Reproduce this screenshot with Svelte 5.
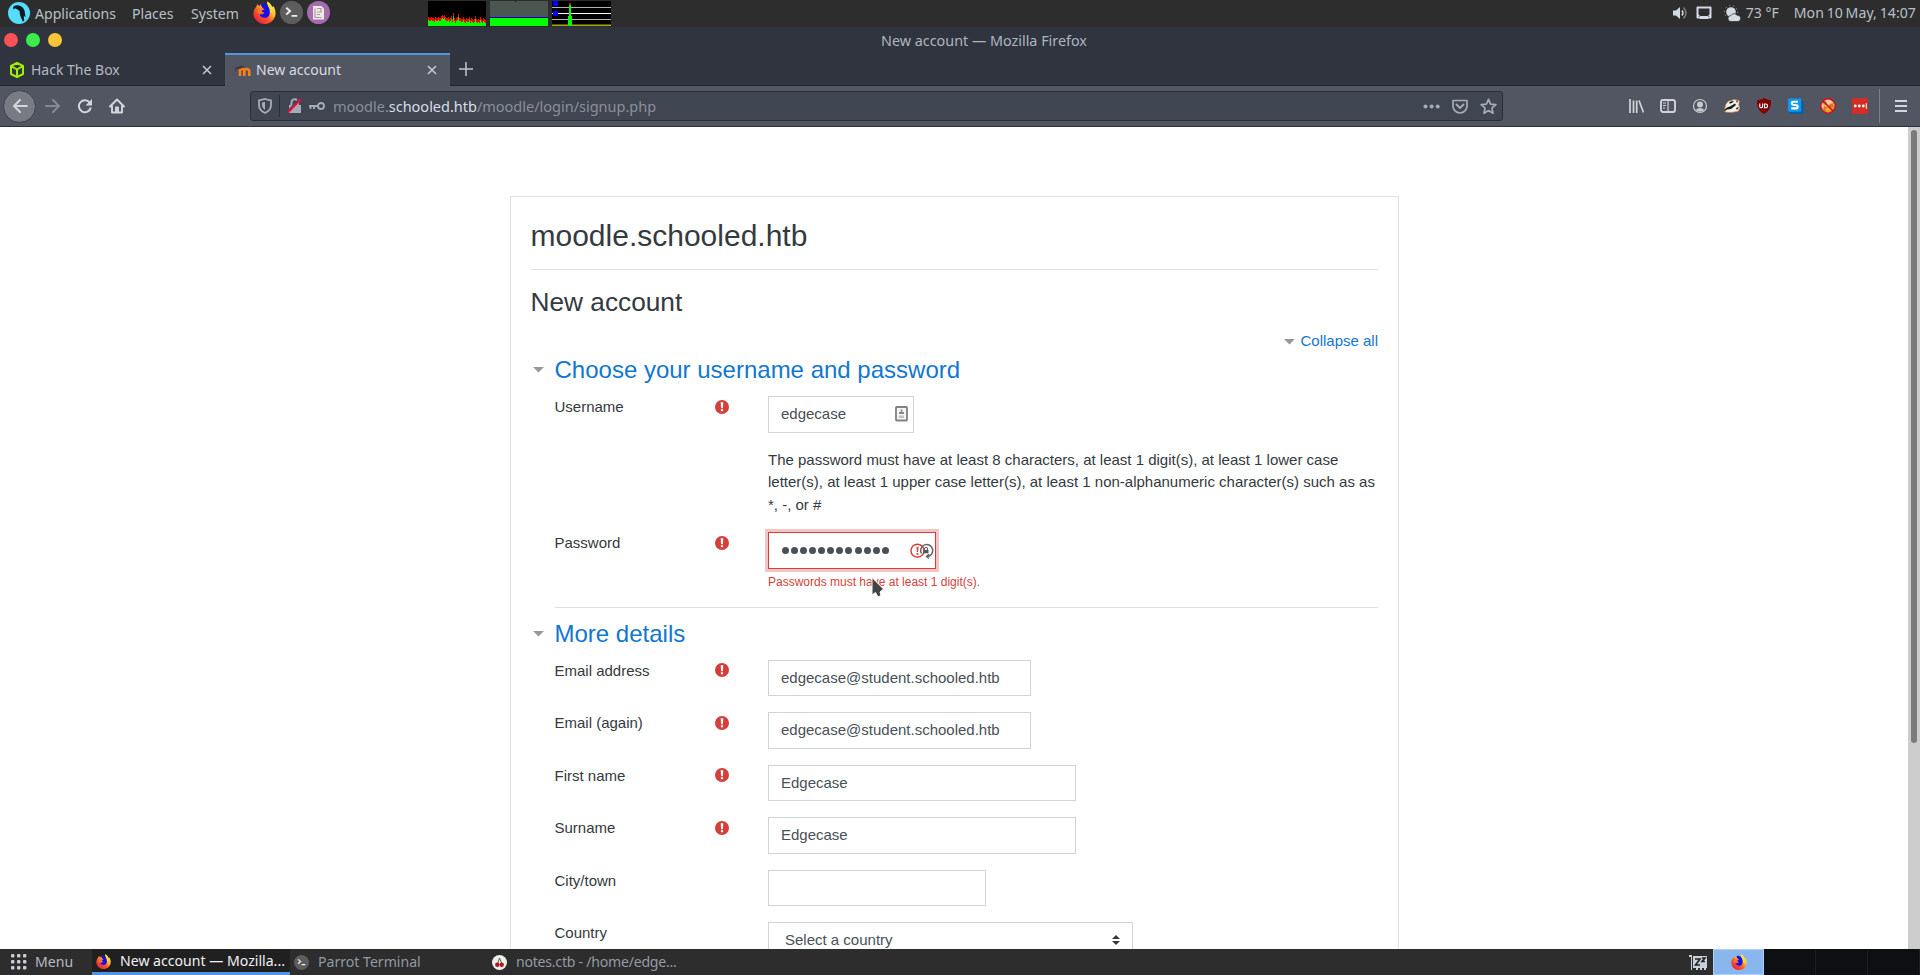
<script>
  const rows = [
    { label: 'Email address', req: true, value: 'edgecase@student.schooled.htb', w: 263 },
    { label: 'Email (again)', req: true, value: 'edgecase@student.schooled.htb', w: 263 },
    { label: 'First name', req: true, value: 'Edgecase', w: 308 },
    { label: 'Surname', req: true, value: 'Edgecase', w: 308 },
    { label: 'City/town', req: false, value: '', w: 218 }
  ];
  const cpu = [8,7,7,8,7,7,6,8,7,7,8,7,7,9,10,9,10,8,7,7,8,6,7,9,6,12,7,5,7,8,11,7,7,6,6,8,6,5,7,6,6,8,5,7,6,5,6,9,6,5,6,5,8,6,5,7,6,5];
</script>

{#snippet fox(s)}
  <svg width={s} height={s} viewBox="0 0 24 24">
    <defs>
      <linearGradient id="flame" x1="0.9" y1="0.05" x2="0.2" y2="0.95">
        <stop offset="0" stop-color="#fff44f" /><stop offset=".35" stop-color="#ffc230" />
        <stop offset=".62" stop-color="#ff5a2c" /><stop offset="1" stop-color="#e8203f" />
      </linearGradient>
    </defs>
    <path fill="url(#flame)" d="M3 6.5 4.8 3.2 6.4 5.4 9 2.6 9.5 5.4 13 7 16 5.5 14.8 0.5C18 2 19.5 4.5 20 6.2L21.5 5.5C23 8.5 23.7 11 23.5 13.5 23 19.8 18 24 12 24S.7 19.500.5 13C.5 10.500 1.500 8 3 6.500Z" />
    <path fill="#1510e8" d="M8.500 3C14 1.500 18 6.500 17.500 12.500 17 17 14 18 11.500 17.500 8.500 17 7 15.500 6.500 13.300 8.500 14.500 10.500 14 12 12.500 10 11.800 8.500 10.500 8.500 9.500L12 8.500C10.500 7.500 8 6 8.500 3Z" />
    <path fill="#ff7b22" d="M5 7.500 9 8 12.300 8.700 8.800 10.200 9.700 12 7 14 4.500 12Z" />
    <path fill="#ffe03c" d="M14.800 .5C14 5 19 7 18.500 13 22 9 19.500 3.500 14.800 .5Z" />
  </svg>
{/snippet}

{#snippet term(s)}
  <svg width={s} height={s} viewBox="0 0 24 24"><circle cx="12" cy="12" r="12" fill="#5d5d5d" /><path d="M6.500 7 10.500 10.500 6.500 14M12 15.500h6" fill="none" stroke="#eee" stroke-width="2" /></svg>
{/snippet}

{#snippet req()}
  <svg class="req" width="14" height="14" viewBox="0 0 14 14"><circle cx="7" cy="7" r="7" fill="#d43f3a" /><path d="M5.700 2.300h2.600l-.4 6H6.100zM5.900 9.200h2.200v2.100H5.900z" fill="#fff" /></svg>
{/snippet}

{#snippet close()}
  <svg class="close" width="10" height="10" viewBox="0 0 10 10"><path d="M1 1 9 9M9 1 1 9" stroke="#c6cad2" stroke-width="1.500" /></svg>
{/snippet}

<div class="screen">
  <header class="panel">
    <svg class="parrot" width="22" height="22" viewBox="0 0 22 22"><circle cx="11" cy="11" r="11" fill="#55dcff" /><path d="M5 5.500C6 3.200 9.500 2.500 12.500 4 15.500 5.500 16.800 8 17 11.500L17.500 15.500 15.800 13.500 16.200 19 14.800 19.500 13 15.500C12 13.500 11.800 11.500 11.500 9L9.500 7.500 7 6.200 5.500 7.500Z" fill="#101820" /></svg>
    <span class="m1">Applications</span><span class="m2">Places</span><span class="m3">System</span>
    <span class="ql">{@render fox(23)}{@render term(23)}
      <svg width="23" height="23" viewBox="0 0 23 23"><circle cx="11.500" cy="11.500" r="11.500" fill="#a56bae" /><path d="M6 5h8.500l2.500 2.500v11H6z" fill="#f1e9e5" /><path d="M8 7.500v9h6.500M10 7.500h4v3.500h-4M10 13.500h3" fill="none" stroke="#a79aa5" stroke-width="1.200" /></svg>
    </span>
    <svg class="graphs" width="183" height="25" viewBox="0 0 183 25" shape-rendering="crispEdges">
      <path d="M0 0h58v25H0zM124 0h59v25h-59z" fill="#000" />
      {#each cpu as h, i}
        <rect x={i} y={24 - h} width="1" height={h} fill="#f00" /><rect x={i} y={26.500 - h} width="1" height={h - 1.500} fill="#0f0" />
      {/each}
      <path d="M62 0h58v16H62z" fill="#4a564f" /><path d="M62 16h58v1H62z" fill="#0000c8" /><path d="M62 17h58v8H62z" fill="#0f0" />
      <path d="M87 0h1v1h-1z" fill="#000" />
      <path d="M124 6.500h59M124 18.500h59" stroke="#b4b4b4" stroke-width="1" /><path d="M124 12.500h59" stroke="#fff" />
      <path d="M125 0h5v5h-5zM125 10h5v5h-5z" fill="#00f" /><path d="M124 23h59v1h-59z" fill="#f00" /><path d="M124 24h59v1h-59z" fill="#0f0" />
      <path d="M140 25V15h1V3h2v12h1v10z" fill="#0f0" /><path d="M141 2h2v2h-2z" fill="#f00" />
    </svg>
    <span class="tray">
      <svg width="16" height="16" viewBox="0 0 16 16"><path d="M1 5.500h3L8 2v12l-4-3.500H1z" fill="#d3dae3" /><path d="M10 5.500q1.800 2.500 0 5" fill="none" stroke="#d3dae3" stroke-width="1.500" /><path d="M11.500 2.500q5 5.500 0 11" fill="none" stroke="#777c82" stroke-width="1.500" /></svg>
      <svg class="t2" width="16" height="14" viewBox="0 0 16 14"><path d="M1.500 1.500h13v10h-13z" fill="none" stroke="#d3dae3" stroke-width="2" stroke-linejoin="round" /><path d="M4 10h8v3H4z" fill="#d3dae3" /><path d="M2 8v2h2zM14 8v2h-2z" fill="#d3dae3" /></svg>
      <svg class="t3" width="17" height="17" viewBox="0 0 17 17"><circle cx="7" cy="7" r="4.800" fill="#d3dae3" /><circle cx="7" cy="7" r="6.500" fill="none" stroke="#aab0b8" stroke-width="1" stroke-dasharray="1 3" /><path d="M7 16.500a2.900 2.900 0 0 1 0-6 3.500 3.500 0 0 1 6-.3 3 3 0 0 1 1 6.300z" fill="#d3dae3" stroke="#2d2d2d" stroke-width=".7" /></svg>
      <span class="temp">73 °F</span><span class="clock">Mon 10 May, 14:07</span>
    </span>
  </header>

  <div class="title"><span class="lights"><i class="r"></i><i class="g"></i><i class="y"></i></span><span>New account — Mozilla Firefox</span></div>

  <div class="tabs">
    <div class="tab">
      <svg class="fav" width="16" height="18" viewBox="0 0 16 18"><path d="M8 1.800 14 5v8L8 16.200 2 13V5zM3 5.500l5 3 5-3M8 8.500V15" fill="none" stroke="#9fef00" stroke-width="2" stroke-linejoin="round" /></svg>
      <span>Hack The Box</span>{@render close()}
    </div>
    <div class="tab active">
      <svg class="fav" width="16" height="16" viewBox="0 0 16 16"><path d="M5 14V9q0-2 2-2t2.300 2v5M9.300 9q.2-2 2.400-2t2.600 2v5" fill="none" stroke="#f98012" stroke-width="2.600" /><path d="M0 5.500 7 3.500 9.500 4 6.500 6.500 3 7 1 7.500V10H.3z" fill="#403c3b" /></svg>
      <span>New account</span>{@render close()}
    </div>
    <svg class="plus" width="14" height="14" viewBox="0 0 14 14"><path d="M7 0v14M0 7h14" stroke="#c0c4cd" stroke-width="1.500" /></svg>
  </div>

  <div class="toolbar">
    <span class="back"><svg width="16" height="16" viewBox="0 0 16 16"><path d="M15 8H2M8 2 2 8l6 6" fill="none" stroke="#d3d6dd" stroke-width="2" stroke-linecap="round" stroke-linejoin="round" /></svg></span>
    <svg class="fwd" width="16" height="16" viewBox="0 0 16 16"><path d="M1 8h13M8 2l6 6-6 6" fill="none" stroke="#858994" stroke-width="2" stroke-linecap="round" stroke-linejoin="round" /></svg>
    <svg class="rel" width="16" height="16" viewBox="0 0 16 16"><path d="M13 5A6 6 0 1 0 13.800 9.500" fill="none" stroke="#d3d6dd" stroke-width="2" /><path d="M15 1v6.500H8.500z" fill="#d3d6dd" /></svg>
    <svg class="home" width="16" height="16" viewBox="0 0 16 16"><path d="M1 8.500 8 1.500l7 7M3 8v6.500h10V8M7 14V9.500h2V14" fill="none" stroke="#d3d6dd" stroke-width="1.900" stroke-linejoin="round" stroke-linecap="round" /></svg>
    <div class="url">
      <svg class="shield" width="14" height="16" viewBox="0 0 14 16"><path d="M7 1 13 2.500V7c0 4-2.500 6.500-6 8-3.500-1.500-6-4-6-8V2.500z" fill="none" stroke="#a7abb4" stroke-width="1.800" /><path d="M7 4v8C5 10.500 4 9 4 7V4.600z" fill="#a7abb4" /></svg>
      <i class="sep"></i>
      <svg class="lock" width="15" height="16" viewBox="0 0 15 16"><path d="M4.500 7V4.500a3.200 3.200 0 0 1 6.400 0V7" fill="none" stroke="#a7abb4" stroke-width="2" /><path d="M2 7h12v8H2z" fill="#a7abb4" /><path d="M.5 13.500 13 0" stroke="#404552" stroke-width="1.500" /><path d="M1 14.500 14 1" stroke="#f4093e" stroke-width="1.900" /></svg>
      <svg class="key" width="16" height="10" viewBox="0 0 16 10"><circle cx="12" cy="5" r="3" fill="none" stroke="#a7abb4" stroke-width="1.900" /><path d="M9 5H0M1.500 5v3M5 5v3" fill="none" stroke="#a7abb4" stroke-width="1.900" /></svg>
      <span class="addr">moodle.<b>schooled.htb</b>/moodle/login/signup.php</span>
      <span class="uact">
        <svg width="17" height="5" viewBox="0 0 17 5"><g fill="#a7abb4"><circle cx="2.500" cy="2.500" r="2" /><circle cx="8.600" cy="2.500" r="2" /><circle cx="14.700" cy="2.500" r="2" /></g></svg>
        <svg width="16" height="15" viewBox="0 0 16 15"><path d="M1 1.500h14V7a7 7 0 0 1-14 0z" fill="none" stroke="#a7abb4" stroke-width="1.700" stroke-linejoin="round" /><path d="M4.500 5.500 8 9l3.500-3.500" fill="none" stroke="#a7abb4" stroke-width="1.900" stroke-linecap="round" /></svg>
        <svg width="17" height="17" viewBox="0 0 17 17"><path d="m8.500 1.300 2.100 4.800 5.200.5-3.900 3.500 1.100 5.100-4.500-2.700L4 15.200l1.100-5.100-3.900-3.500 5.200-.5z" fill="none" stroke="#a7abb4" stroke-width="1.700" stroke-linejoin="round" /></svg>
      </span>
    </div>
    <div class="ext">
      <svg width="16" height="16" viewBox="0 0 16 16"><path d="M2 1v14M5.500 2.500V15M8.700 2.500V15M11 2.500 15.500 14.500" stroke="#d0d3da" stroke-width="1.700" /></svg>
      <svg width="16" height="16" viewBox="0 0 16 16"><rect x="1" y="2" width="14" height="12" rx="2" fill="none" stroke="#d0d3da" stroke-width="1.900" /><path d="M8 2v12M3 5h3M3 7.500h3M3 10h2" stroke="#d0d3da" stroke-width="1.200" /></svg>
      <svg width="16" height="16" viewBox="0 0 16 16"><circle cx="8" cy="8" r="6.500" fill="none" stroke="#c6c9d0" stroke-width="1.200" /><circle cx="8" cy="6.500" r="3" fill="#c6c9d0" /><path d="M3.500 12Q8 8 12.500 12 8 15.500 3.500 12Z" fill="#c6c9d0" /></svg>
      <svg width="16" height="16" viewBox="0 0 16 16"><path d="M2 6 4.500 3 7 2.500 10 1.500l3 .5 2.500 1-.8 4L16 10l-2 3.500-7 1L1 14l-.5-3z" fill="#f3eee4" stroke="#c87941" stroke-width=".7" /><path d="M5 4.500 8 3l2 .7-4 2zM3 9.500l3-1 5-3 1 1.500-5 4-4 .5L1 13 0 12zM12 10l3-1-2 3zM12 2.500l2 .5-1 2z" fill="#171b1c" /></svg>
      <svg width="16" height="16" viewBox="0 0 16 16"><path d="M8 0Q11 2 15 2.300C15 9 13.500 13 8 16 2.500 13 1 9 1 2.300Q5 2 8 0Z" fill="#800000" /><path d="M3.800 5.500v3q0 1.300 1.400 1.300t1.400-1.300v-3M8.500 6v3.800h1q2 0 2-1.900T9.500 6z" fill="none" stroke="#fff" stroke-width="1.100" /></svg>
      <svg width="16" height="17" viewBox="0 0 17 17"><path d="m14 1.500 2.500 2.500v12.500H3L.5 14z" fill="#075fa8" /><path d="M0 0h14v14H0z" fill="#0f98f4" /><path d="M10.500 3.500H6Q4 3.500 4 5t2 1.900h2q2.300 0 2.300 1.900T8 10.500H3.500" fill="none" stroke="#fff" stroke-width="2.200" /></svg>
      <svg width="16" height="16" viewBox="0 0 16 16"><circle cx="8" cy="8" r="7.300" fill="#ebc6a3" /><path d="M4 8 7 9l3-3 3-1 1 4-3 5-5 .5L3 12z" fill="#e37612" /><path d="M2 4 6 2.500 7 6 4 7z" fill="#d5772b" /><path d="m5 11 3-2 3 1 2-1-2 4-4 1z" fill="#f5ae29" /><circle cx="8" cy="8" r="7.200" fill="none" stroke="#c6111d" stroke-width="1.500" /><path d="m3 3 10 10" stroke="#c6111d" stroke-width="1.500" /></svg>
      <svg width="16" height="16" viewBox="0 0 16 16"><rect width="16" height="16" rx="1" fill="#d32d27" /><g fill="#fff"><circle cx="3.300" cy="8" r="1.400" /><circle cx="7.300" cy="8" r="1.400" /><circle cx="11.300" cy="8" r="1.400" /><path d="M13.800 5.300h1v5.400h-1z" /></g></svg>
      <i class="bar"></i>
      <svg class="burger" width="12" height="12" viewBox="0 0 12 12"><path d="M0 1h12M0 6h12M0 11h12" stroke="#d3d6dd" stroke-width="1.900" /></svg>
    </div>
  </div>

  <main>
    <section class="card">
      <h2>moodle.schooled.htb</h2>
      <h3>New account</h3>
      <div class="collapse"><i class="tri"></i>Collapse all</div>
      <h4><i class="tri"></i>Choose your username and password</h4>
      <div class="row"><span class="lab">Username</span>{@render req()}
        <div class="input user"><span>edgecase</span>
          <svg width="13" height="16" viewBox="0 0 13 16"><rect x="1" y="1" width="11" height="13.500" rx=".8" fill="#f4f4f4" stroke="#818181" stroke-width="1.800" /><path d="M5.700 3.500h1.600V6H9v2H4V6h1.700z" fill="#888" /><path d="M4 9.500h5V12H4z" fill="#c3c3c3" /></svg>
        </div></div>
      <p>The password must have at least 8 characters, at least 1 digit(s), at least 1 lower case<br />letter(s), at least 1 upper case letter(s), at least 1 non-alphanumeric character(s) such as as<br />*, -, or #</p>
      <div class="row pw"><span class="lab">Password</span>{@render req()}
        <div>
          <div class="input bad">
            <span class="dots">{#each Array(12) as _}<i></i>{/each}</span>
            <svg width="24" height="16" viewBox="0 0 24 16"><circle cx="7.500" cy="7.700" r="6.500" fill="#fff" stroke="#d43f3a" stroke-width="1.400" /><path d="M6.500 3.700h2l-.4 5.300H6.900zM6.600 10h1.800v1.700H6.600z" fill="#d43f3a" /><path d="M11.500 10.500A6 6 0 1 1 17 13.500M19 11.200 16.500 13.500l2.500 2" fill="none" stroke="#666" stroke-width="1.500" /><path d="M13.500 7h5v3.300h-5z" fill="#555" /><path d="M14.500 7V5.800a1.500 1.500 0 0 1 3 0V7" fill="none" stroke="#555" /></svg>
          </div>
          <div class="err">Passwords must have at least 1 digit(s).</div>
        </div></div>
      <hr />
      <h4 class="more"><i class="tri"></i>More details</h4>
      {#each rows as r}
        <div class="row"><span class="lab">{r.label}</span>{#if r.req}{@render req()}{:else}<i class="req"></i>{/if}
          <div class="input" style="width:{r.w}px"><span>{r.value}</span></div></div>
      {/each}
      <div class="row"><span class="lab">Country</span><i class="req"></i>
        <div class="input sel"><span>Select a country</span><svg width="8" height="10" viewBox="0 0 8 10"><path d="M0 4 4 0l4 4zM0 6h8l-4 4z" fill="#343a40" /></svg></div></div>
    </section>
    <div class="scroll"><i></i></div>
    <svg class="cursor" width="17" height="24" viewBox="0 0 17 24"><path d="M3 1.500v17.500l3.500-2.500 2.500 4.500 3-1.500-1-3.500 3.500-3z" fill="#444" stroke="#fff" stroke-width="1" /></svg>
  </main>

  <footer>
    <svg class="grid" width="16" height="16" viewBox="0 0 16 16"><g fill="#c9ced6">{#each [0, 6, 12] as y}{#each [0, 6, 12] as x}<rect {x} {y} width="3.400" height="3.400" rx="1" />{/each}{/each}</g></svg>
    <span class="menu">Menu</span>
    <div class="task on">{@render fox(15)}<span>New account — Mozilla...</span></div>
    <div class="task">{@render term(15)}<span>Parrot Terminal</span></div>
    <div class="task notes"><svg width="15" height="15" viewBox="0 0 15 15"><circle cx="7.500" cy="7.500" r="7.500" fill="#eee" /><path d="M5.500 9 7.500 3l2.500 6" fill="none" stroke="#347b25" /><circle cx="5.300" cy="9.800" r="2.200" fill="#b6131f" /><circle cx="9.700" cy="9.800" r="2.200" fill="#b6131f" /></svg><span>notes.ctb - /home/edge...</span></div>
    <svg class="ram" width="18" height="17" viewBox="0 0 18 17"><path d="M0 1h3v15H2V3H0zM4 2h14v12h-1v2h-2v-2h-2v2h-2v-2H9v2H7v-2H4z" fill="#c9d0d8" /><path d="M6 5h5L6.500 11H11M13 4h3l-3 3.500h3" fill="none" stroke="#222" stroke-width="1.600" /></svg>
    <div class="ws cur">{@render fox(16)}</div><div class="ws"></div><div class="ws"></div><div class="ws"></div>
  </footer>
</div>

<style>
  :global(body) { margin: 0; overflow: hidden; background: #fff; }
  .screen { width: 1920px; height: 975px; display: flex; flex-direction: column; overflow: hidden; font-family: "Noto Sans", sans-serif; font-size: 14.500px; color: #c9ced6; white-space: nowrap; }
  .screen * { box-sizing: border-box; }
  svg { display: block; flex: none; }
  .panel { height: 27px; flex: none; background: #2d2d2d; display: flex; align-items: center; padding-left: 8px; color: #b9c0ca; font-size: 14.100px; }
  .parrot, .ql { margin-top: -2px; }
  .m1, .m2, .m3, .temp, .clock { padding-bottom: 1px; }
  .m1 { width: 97px; margin-left: 5px; } .m2 { width: 59px; } .m3 { width: 62px; }
  .ql { display: flex; gap: 4px; width: 174px; }
  .graphs { margin-left: 1px; margin-top: 0; }
  .tray { margin-left: auto; display: flex; align-items: center; padding-right: 4px; margin-top: -1px; }
  .t2 { margin-left: 8px; } .t3 { margin-left: 12px; }
  .temp { width: 48px; margin-left: 5px; } .clock { word-spacing: -1px; text-align: right; letter-spacing: .06px; }
  .title { height: 26px; flex: none; background: #2f343f; position: relative; display: flex; align-items: center; justify-content: center; padding-top: 1px; text-indent: 48px; font-size: 14.350px; color: #aeb4be; }
  .lights { position: absolute; left: 4px; top: 6px; display: flex; gap: 8px; }
  .lights i { width: 14px; height: 14px; border-radius: 50%; }
  .r { background: #fa5057; } .g { background: #3bec4d; } .y { background: #fdc639; }
  .tabs { height: 33px; flex: none; background: #2f343f; display: flex; border-bottom: 1px solid #20232b; font-size: 14px; }
  .tab { width: 225px; height: 33px; display: flex; align-items: center; padding: 1px 13px 0 9px; color: #b4b9c3; }
  .tab span { margin-top: -2px; }
  .tab.active { background: #525662; border-top: 2px solid #5294e2; padding: 0 13px 1px 10px; color: #d8dbe1; }
  .tab.active span { margin-top: -1px; }
  .fav { margin-right: 6px; } .active .fav { margin-right: 5px; }
  .close { margin-left: auto; }
  .plus { margin: 9px 0 0 9px; }
  .toolbar { height: 41px; flex: none; background: #525662; border-bottom: 1px solid #2f2f3d; display: flex; align-items: center; }
  .back { width: 33px; height: 33px; margin-left: 3px; border-radius: 50%; background: #787b83; border: 1px solid #3d4049; display: grid; place-items: center; }
  .fwd { margin-left: 9px; } .rel { margin-left: 16px; } .home { margin-left: 16px; }
  .url { width: 1253px; height: 30px; margin-left: 125px; background: #404552; border: 1px solid #2b2e39; border-radius: 3px; display: flex; align-items: center; color: #8b8f99; }
  .shield { margin-left: 7px; } .sep { width: 1px; height: 22px; background: #2b2e39; margin-left: 7px; }
  .lock { margin-left: 7px; } .key { margin: 0 8px 0 7px; }
  .addr { letter-spacing: -.01px; }
  .addr b { font-weight: 400; color: #d9dde4; }
  .uact { margin-left: auto; display: flex; align-items: center; gap: 12px; padding-right: 5px; }
  .ext { margin-left: 125px; display: flex; align-items: center; gap: 16px; height: 40px; }
  .bar { width: 1px; height: 34px; background: #7c808a; margin-left: -5px; }
  .burger { margin-left: -1px; }
  main { flex: 1; min-height: 0; background: #fff; position: relative; display: flex; overflow: hidden; font: 15px/22.500px "Liberation Sans", Arial, sans-serif; color: #343a40; }
  .card { width: 889px; height: 900px; margin: 69px 0 0 510px; border: 1px solid #dee2e6; padding: 20px 20px 20px 19.500px; flex: none; }
  h2, h3, h4, p { margin: 0; font-weight: 400; }
  h2 { font-size: 30px; line-height: 36px; height: 53px; padding-top: 1px; border-bottom: 1px solid #dee2e6; }
  h3 { font-size: 26.250px; line-height: 32px; margin-top: 16px; }
  .collapse { display: flex; align-items: center; justify-content: flex-end; margin-top: 12px; height: 23px; color: #1177d1; }
  .tri { width: 12px; height: 6px; background: #999; clip-path: polygon(0 0, 100% 0, 50% 100%); }
  .collapse .tri { margin-right: 5px; }
  h4 { display: flex; align-items: center; gap: 10px; padding-left: 2px; margin: 2px 0 12px; height: 29px; font-size: 24px; line-height: 29px; color: #1177d1; }
  .row { display: flex; align-items: flex-start; height: 52.500px; padding-left: 24px; }
  .lab { width: 160px; line-height: 21px; }
  .req { width: 14px; height: 14px; flex: none; margin: 3.500px 39.500px 0 0; }
  .input { height: 36.500px; border: 1px solid #ced4da; display: flex; align-items: center; justify-content: space-between; padding: 0 5px 0 12px; color: #495057; background: #fff; }
  .user { width: 146px; }
  p { margin: 0 0 16px 237.500px; }
  .pw { height: 75px; }
  .bad { width: 168px; height: 37px; border-color: #d43f3a; box-shadow: 0 0 0 3px #f4c5c4; padding-right: 1px; }
  .dots { display: flex; gap: 2.150px; padding-left: .5px; } .dots i { width: 7px; height: 7px; border-radius: 50%; background: #495057; }
  .err { color: #d43f3a; font-size: 12px; line-height: 18px; margin-top: 4px; }
  hr { border: 0; border-top: 1px solid #dee2e6; margin: 0 0 0 24px; }
  .more { margin: 11px 0 11.500px; }
  .sel { width: 365px; padding: 0 12px 0 16px; }
  .scroll { margin-left: auto; width: 12px; background: #cdcdcd; padding: 3px 3px; }
  .scroll i { display: block; width: 6px; height: 613px; border-radius: 3px; background: #7b7b7b; }
  .cursor { position: absolute; left: 869px; top: 449px; }
  footer { height: 26px; flex: none; background: #2d2d2d; display: flex; align-items: center; color: #b4bac4; font-size: 14.100px; }
  .grid { margin-left: 11px; } .menu { margin-left: 8px; width: 57px; padding-bottom: 2px; }
  .task { width: 198px; height: 26px; display: flex; align-items: center; gap: 9px; padding-left: 4px; color: #929aa6; }
  .task span { padding-bottom: 2px; }
  .task.on { background: #202020; border-bottom: 3px solid #5294e2; color: #eef1f5; padding-top: 2px; }
  .notes { letter-spacing: -.24px; }
  .ram { margin-left: auto; margin-right: 6px; }
  .ws { width: 52px; height: 26px; background: #0d0f13; border-right: 1px solid #1b1d23; display: grid; place-items: center; }
  .cur { width: 51px; background: #8ab6ee; border: 1px solid #add0f8; }
</style>
